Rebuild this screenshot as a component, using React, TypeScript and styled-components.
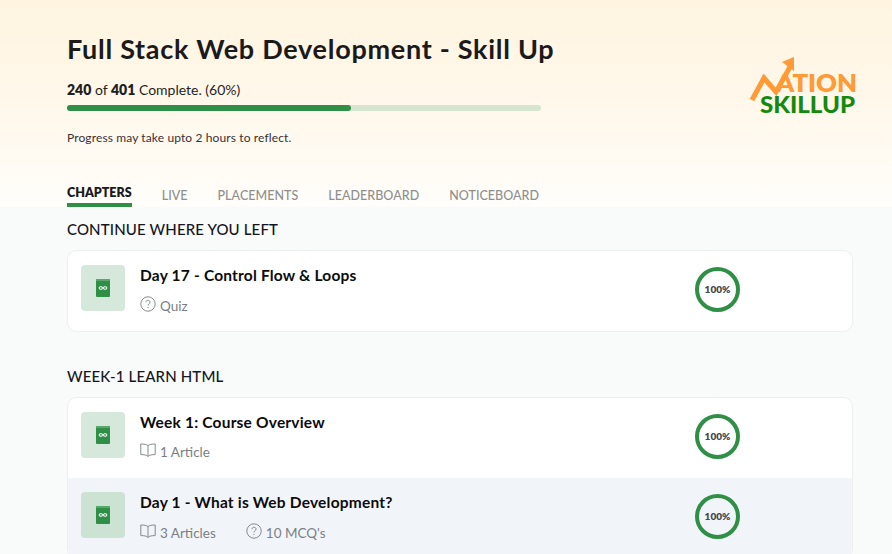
import type { FC, ReactNode } from "react";
import styled, { createGlobalStyle } from "styled-components";

const GlobalStyle = createGlobalStyle`
  html, body {
    margin: 0;
    padding: 0;
    height: 554px;
    overflow: hidden;
    background: #f9fafa;
    font-family: "Lato", "Noto Sans", sans-serif;
  }
  * { box-sizing: border-box; }
`;

const Page = styled.div`
  width: 892px;
  height: 554px;
  overflow: hidden;
`;

const Header = styled.header`
  height: 207px;
  padding: 32px 33px 0 67px;
  background: linear-gradient(180deg, #fff4e0 0%, #fff8ec 55%, #fffefb 100%);
  display: flex;
  flex-direction: column;
`;

const HeaderTop = styled.div`
  display: flex;
  justify-content: space-between;
  height: 137px;
`;

const Title = styled.h1`
  margin: 0;
  font-size: 27px;
  line-height: 34px;
  font-weight: 700;
  color: #1a1a1a;
  letter-spacing: 0.72px;
`;

const CompleteText = styled.div`
  margin-top: 15px;
  font-size: 14px;
  line-height: 18px;
  color: #1f1f1f;
  b { font-weight: 800; }
`;

const Track = styled.div`
  margin-top: 6px;
  width: 474px;
  height: 6px;
  border-radius: 3px;
  background: #d5e5cf;
`;

const Fill = styled.div`
  height: 100%;
  border-radius: 3px;
  background: #2f8f46;
`;

const Note = styled.div`
  margin-top: 19px;
  font-size: 12px;
  line-height: 16px;
  letter-spacing: 0.12px;
  color: #3a2f33;
`;

const LogoBox = styled.div`
  margin-top: 23px;
  width: 112px;
  height: 62px;
  svg { display: block; }
`;

const Tabs = styled.nav`
  display: flex;
  gap: 30px;
  align-items: flex-end;
`;

const Tab = styled.div<{ $active?: boolean }>`
  height: 38px;
  padding-top: ${(p) => (p.$active ? "16px" : "19px")};
  font-size: 12.5px;
  line-height: 16px;
  letter-spacing: ${(p) => (p.$active ? "0" : "0.03px")};
  font-weight: ${(p) => (p.$active ? 800 : 500)};
  color: ${(p) => (p.$active ? "#1a1a1a" : "#8f8f8f")};
  border-bottom: 4px solid ${(p) => (p.$active ? "#2f8f46" : "transparent")};
`;

const Content = styled.main`
  padding: 12px 39px 0 67px;
`;

const SectionTitle = styled.h2<{ $gap?: number }>`
  margin: ${(p) => p.$gap ?? 0}px 0 11px;
  font-size: 15px;
  line-height: 20px;
  font-weight: 500;
  letter-spacing: 0.14px;
  color: #14171f;
  text-transform: uppercase;
`;

const Card = styled.div`
  background: #fff;
  border: 1px solid #eceef0;
  border-radius: 10px;
  overflow: hidden;
`;

const Row = styled.div<{ $alt?: boolean }>`
  height: 80px;
  padding: 14px 0 0 13px;
  display: flex;
  background: ${(p) => (p.$alt ? "#f1f5f9" : "#fff")};
`;

const Thumb = styled.div<{ $alt?: boolean }>`
  width: 44px;
  height: 46px;
  border-radius: 4px;
  background: ${(p) => (p.$alt ? "#cce2d3" : "#d6e8dc")};
  display: flex;
  align-items: center;
  justify-content: center;
  flex: none;
`;

const Info = styled.div`
  margin-left: 15px;
  width: 555px;
`;

const RowTitle = styled.div`
  font-size: 15.5px;
  line-height: 20px;
  font-weight: 700;
  color: #0c0c0c;
  letter-spacing: 0.2px;
`;

const Meta = styled.div`
  margin-top: 11px;
  display: flex;
  gap: 30px;
`;

const MetaItem = styled.span`
  display: inline-flex;
  align-items: center;
  gap: 4px;
  font-size: 13.5px;
  line-height: 18px;
  color: #7b7f85;
  svg { margin-bottom: 3px; }
`;

const Ring = styled.div`
  width: 45px;
  height: 45px;
  margin-top: 2px;
  padding-bottom: 1px;
  border: 4px solid #2f8f46;
  border-radius: 50%;
  display: flex;
  align-items: center;
  justify-content: center;
  font-size: 10px;
  font-weight: 800;
  color: #45494e;
  flex: none;
`;

const BookIcon = () => (
  <svg width="16" height="20" viewBox="0 0 16 20">
    <rect x="1" y="1" width="14" height="18" rx="1" fill="#2f8f46" />
    <rect x="1" y="1" width="14" height="2" fill="#58a86c" />
    <path
      d="M8 10C6.6 8.2 4.2 8.4 4.2 10s2.4 1.8 3.8 0c1.4-1.8 3.8-1.6 3.8 0s-2.4 1.8-3.8 0z"
      fill="none"
      stroke="#e4f2e8"
      strokeWidth="1.2"
    />
  </svg>
);

const ArticleIcon = () => (
  <svg width="16" height="15" viewBox="0 0 16 15" fill="none" stroke="#85898e" strokeWidth="1">
    <path d="M8 2.6C6.6 1.4 4.2 1 .8 1v10.6c3.4 0 5.8.4 7.2 1.8 1.4-1.4 3.8-1.8 7.2-1.8V1C11.8 1 9.4 1.4 8 2.6zM8 2.6v10.8" />
  </svg>
);

const QuizIcon = () => (
  <svg width="16" height="16" viewBox="0 0 16 16" fill="none" stroke="#85898e" strokeWidth="1">
    <circle cx="8" cy="8" r="7.2" />
    <path d="M6 6.2c0-1.2.9-1.9 2-1.9s2.1.7 2.1 1.8c0 1.6-2.1 1.7-2.1 3.3" />
    <path d="M8 10.9v1.1" />
  </svg>
);

const Logo = () => (
  <svg width="112" height="62" viewBox="0 0 112 62">
    <path
      d="M5 45 L17 23 L29 37 L44 10"
      fill="none"
      stroke="#ff9a35"
      strokeWidth="5"
      strokeLinejoin="miter"
    />
    <path d="M35 7 L47 2 L47 16 Z" fill="#ff9a35" />
    <text x="29" y="37" fontSize="24" fontWeight="800" fill="#ff9a35" fontFamily="Lato, sans-serif" textLength="81" lengthAdjust="spacingAndGlyphs">
      ATION
    </text>
    <text x="13" y="58" fontSize="23" fontWeight="900" fill="#138a0e" fontFamily="Lato, sans-serif" textLength="95" lengthAdjust="spacingAndGlyphs">
      SKILLUP
    </text>
  </svg>
);

interface ChapterProps {
  title: string;
  alt?: boolean;
  children: ReactNode;
}

const Chapter: FC<ChapterProps> = ({ title, alt, children }) => (
  <Row $alt={alt}>
    <Thumb $alt={alt}>
      <BookIcon />
    </Thumb>
    <Info>
      <RowTitle>{title}</RowTitle>
      <Meta>{children}</Meta>
    </Info>
    <Ring>100%</Ring>
  </Row>
);

const App: FC = () => {
  const tabs = ["Live", "Placements", "Leaderboard", "Noticeboard"];
  return (
    <Page>
      <GlobalStyle />
      <Header>
        <HeaderTop>
          <div>
            <Title>Full Stack Web Development - Skill Up</Title>
            <CompleteText>
              <b>240</b> of <b>401</b> Complete. (60%)
            </CompleteText>
            <Track>
              <Fill style={{ width: `${(240 / 401) * 100}%` }} />
            </Track>
            <Note>Progress may take upto 2 hours to reflect.</Note>
          </div>
          <LogoBox>
            <Logo />
          </LogoBox>
        </HeaderTop>
        <Tabs>
          <Tab $active>CHAPTERS</Tab>
          {tabs.map((t) => (
            <Tab key={t}>{t.toUpperCase()}</Tab>
          ))}
        </Tabs>
      </Header>
      <Content>
        <SectionTitle>Continue where you left</SectionTitle>
        <Card>
          <Chapter title="Day 17 - Control Flow & Loops">
            <MetaItem>
              <QuizIcon />
              Quiz
            </MetaItem>
          </Chapter>
        </Card>
        <SectionTitle $gap={34}>Week-1 Learn HTML</SectionTitle>
        <Card>
          <Chapter title="Week 1: Course Overview">
            <MetaItem>
              <ArticleIcon />1 Article
            </MetaItem>
          </Chapter>
          <Chapter title="Day 1 - What is Web Development?" alt>
            <MetaItem>
              <ArticleIcon />3 Articles
            </MetaItem>
            <MetaItem>
              <QuizIcon />
              10 MCQ's
            </MetaItem>
          </Chapter>
        </Card>
      </Content>
    </Page>
  );
};

export default App;
